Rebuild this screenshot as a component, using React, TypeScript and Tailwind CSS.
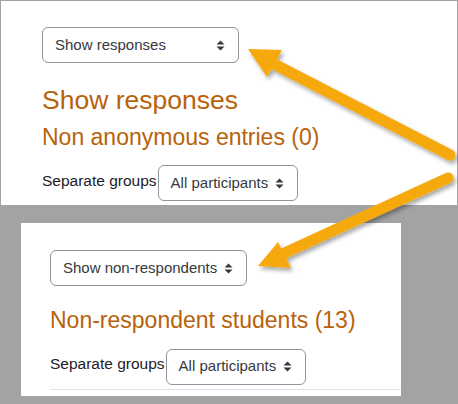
import React from "react"

const font = { fontFamily: '"Liberation Sans", Arial, sans-serif' }

function UpDown() {
  return (
    <svg width="9" height="11" viewBox="0 0 9 11" className="shrink-0">
      <path d="M4.5 0.5 L8.5 4.5 H0.5 Z" fill="#343a40" />
      <path d="M4.5 10.5 L8.5 6.5 H0.5 Z" fill="#343a40" />
    </svg>
  )
}

function Select({ label, width }: { label: string; width: string }) {
  return (
    <div
      className={`flex h-[36px] ${width} shrink-0 items-center justify-between rounded-[6px] border border-[#8f959e] bg-white pl-[12px] pr-[13px] text-[15px] text-[#343a40]`}
    >
      <span>{label}</span>
      <UpDown />
    </div>
  )
}

function GroupRow() {
  return (
    <div className="flex items-center">
      <span className="mt-[-5px] text-[15.5px] text-[#1d2125]">Separate groups</span>
      <div className="ml-px">
        <Select label="All participants" width="w-[140px]" />
      </div>
    </div>
  )
}

function Arrows() {
  return (
    <svg className="pointer-events-none absolute left-0 top-0" width="458" height="404" viewBox="0 0 458 404">
      <defs>
        <filter id="shadow" x="-20%" y="-20%" width="140%" height="140%">
          <feDropShadow dx="2" dy="3" stdDeviation="2" floodColor="#000" floodOpacity="0.35" />
        </filter>
      </defs>
      <g filter="url(#shadow)" fill="#f6a90e" stroke="#f6a90e">
        <line x1="450" y1="155" x2="270" y2="62" strokeWidth="11" strokeLinecap="round" />
        <polygon points="248,49 282,50 267,77" stroke="none" />
        <line x1="448" y1="178" x2="278" y2="256" strokeWidth="11" strokeLinecap="round" />
        <polygon points="258,266 278,242 291,268" stroke="none" />
      </g>
    </svg>
  )
}

export default function App() {
  return (
    <div className="relative h-[404px] w-[458px] overflow-hidden bg-[#a3a3a3]" style={font}>
      {/* top panel */}
      <div className="ml-px mt-px h-[204px] w-[456px] bg-white pl-[41px] pt-[26px]">
        <Select label="Show responses" width="w-[197px]" />
        <h2 className="mt-[22px] text-[26.5px] leading-[1.2] text-[#b8620a]">Show responses</h2>
        <h3 className="mt-[7px] text-[23px] leading-[1.2] text-[#b8620a]">Non anonymous entries (0)</h3>
        <div className="mt-[14px]">
          <GroupRow />
        </div>
      </div>

      {/* bottom panel */}
      <div className="ml-[21px] mt-[18px] h-[173px] w-[380px] bg-white pl-[29px] pt-[27px]">
        <Select label="Show non-respondents" width="w-[197px]" />
        <h3 className="mt-[21px] text-[23px] leading-[1.2] text-[#b8620a]">Non-respondent students (13)</h3>
        <div className="mt-[14px]">
          <GroupRow />
        </div>
        <div className="mt-[4px] h-px bg-[#dee2e6]" />
      </div>

      <Arrows />
    </div>
  )
}
